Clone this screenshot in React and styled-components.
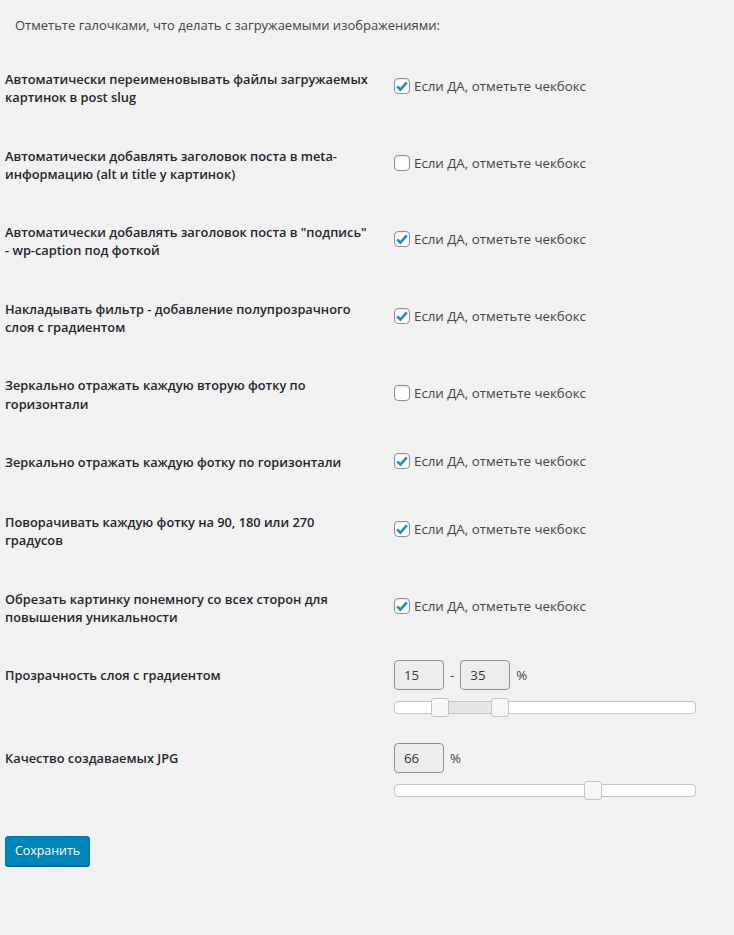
import React from "react";
import styled, { createGlobalStyle } from "styled-components";

const Global = createGlobalStyle`
  html, body { margin: 0; padding: 0; background: #f1f1f1; }
  body { font-family: "Open Sans", "Noto Sans", sans-serif; color: #444; }
`;

const Page = styled.div`
  padding: 14px 0 60px 5px;
  width: 729px;
  min-height: 935px;
  box-sizing: border-box;
`;

const Intro = styled.p`
  margin: 0 0 14px 10px;
  font-size: 13px;
  line-height: 22px;
  color: #444;
`;

const Row = styled.div`
  display: grid;
  grid-template-columns: 389px 1fr;
  align-items: ${(p) => (p.$top ? "start" : "center")};
`;

const Label = styled.div`
  align-self: start;
  padding: 20px 20px 20px 0;
  font-size: 12.8px;
  font-weight: 600;
  line-height: 18.3px;
  color: #23282d;
`;

const Cell = styled.div`
  padding: 14px 10px 15px 0;
  min-height: 31px;
  display: flex;
  flex-direction: column;
  justify-content: center;
`;

const CheckLine = styled.label`
  display: flex;
  align-items: center;
  gap: 4px;
  font-size: 13.3px;
  line-height: 20px;
  color: #444;
  margin-top: -3px;
`;

const Box = styled.span`
  width: 16px;
  height: 16px;
  box-sizing: border-box;
  border: 1px solid #8c8f94;
  border-radius: 4px;
  background: #fff;
  box-shadow: inset 0 1px 2px rgba(0, 0, 0, 0.1);
  display: inline-flex;
  align-items: center;
  justify-content: center;
  flex: none;
`;

const InputLine = styled.div`
  display: flex;
  align-items: center;
  gap: 6px;
  font-size: 13.3px;
  color: #444;
`;

const NumBox = styled.div`
  width: 50px;
  height: 30px;
  box-sizing: border-box;
  border: 1px solid #8c8f94;
  border-radius: 4px;
  background: #ededed;
  display: flex;
  align-items: center;
  padding-left: 9px;
  font-size: 13.3px;
  color: #32373c;
`;

const Track = styled.div`
  position: relative;
  margin-top: 11px;
  width: 302px;
  height: 13px;
  box-sizing: border-box;
  border: 1px solid #c5c5c5;
  border-radius: 4px;
  background: #fff;
`;

const RangeFill = styled.div`
  position: absolute;
  top: 0;
  bottom: 0;
  background: #e6e6e6;
`;

const Handle = styled.div`
  position: absolute;
  top: -4px;
  width: 18px;
  height: 19px;
  margin-left: -9px;
  box-sizing: border-box;
  border: 1px solid #c5c5c5;
  border-radius: 3px;
  background: #f6f6f6;
`;

const Submit = styled.button`
  display: block;
  margin-top: 24px;
  height: 30px;
  padding: 0 9px;
  border: 1px solid #0073aa;
  border-radius: 3px;
  background: #0085ba;
  color: #fff;
  font-family: inherit;
  font-size: 12.4px;
  line-height: 28px;
  box-shadow: 0 1px 0 #006799;
`;

const Tick = () => (
  <svg width="14" height="14" viewBox="0 0 14 14">
    <path d="M2.2 7.4 L5.4 10.6 L11.8 3.4" fill="none" stroke="#1e8cbe" strokeWidth="2.6" strokeLinejoin="miter" />
  </svg>
);

const checks = [
  ["Автоматически переименовывать файлы загружаемых картинок в post slug", true],
  ["Автоматически добавлять заголовок поста в meta-информацию (alt и title у картинок)", false],
  ["Автоматически добавлять заголовок поста в \"подпись\" - wp-caption под фоткой", true],
  ["Накладывать фильтр - добавление полупрозрачного слоя с градиентом", true],
  ["Зеркально отражать каждую вторую фотку по горизонтали", false],
  ["Зеркально отражать каждую фотку по горизонтали", true],
  ["Поворачивать каждую фотку на 90, 180 или 270 градусов", true],
  ["Обрезать картинку понемногу со всех сторон для повышения уникальности", true],
];

const Slider = ({ values, range }) => (
  <Track>
    {range && (
      <RangeFill style={{ left: `${values[0]}%`, width: `${values[1] - values[0]}%` }} />
    )}
    {values.map((v, i) => (
      <Handle key={i} style={{ left: `${v}%` }} />
    ))}
  </Track>
);

export default function App() {
  return (
    <Page>
      <Global />
      <Intro>Отметьте галочками, что делать с загружаемыми изображениями:</Intro>
      {checks.map(([text, on], i) => (
        <Row key={i}>
          <Label>{text}</Label>
          <Cell>
            <CheckLine>
              <Box>{on && <Tick />}</Box>
              Если ДА, отметьте чекбокс
            </CheckLine>
          </Cell>
        </Row>
      ))}
      <Row $top>
        <Label>Прозрачность слоя с градиентом</Label>
        <Cell>
          <InputLine>
            <NumBox>15</NumBox>-<NumBox>35</NumBox>%
          </InputLine>
          <Slider values={[15, 35]} range />
        </Cell>
      </Row>
      <Row $top>
        <Label>Качество создаваемых JPG</Label>
        <Cell>
          <InputLine>
            <NumBox>66</NumBox>%
          </InputLine>
          <Slider values={[66]} />
        </Cell>
      </Row>
      <Submit>Сохранить</Submit>
    </Page>
  );
}
